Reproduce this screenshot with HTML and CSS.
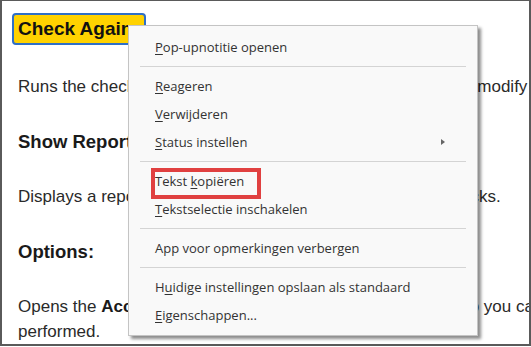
FILE: index.html
```html
<!DOCTYPE html>
<html>
<head>
<meta charset="utf-8">
<link rel="stylesheet" href="styles.css">
</head>
<body>
<div class="frame">
  <div class="content">
    <div class="btn">Check Again</div>
    <p class="para">Runs the checks again to see if the changes you have made modify the results of the report.</p>
    <p class="head">Show Report:</p>
    <p class="para">Displays a report showing the results of the accessibility checks.</p>
    <p class="head">Options:</p>
    <p class="para">Opens the <b>Accessibility Checker Options</b> dialog screen, so you can choose which checks are<br>performed.</p>
  </div>
  <div class="menu">
    <div class="item"><span><u>P</u>op-upnotitie openen</span></div>
    <div class="sep"></div>
    <div class="item"><span><u>R</u>eageren</span></div>
    <div class="item"><span><u>V</u>erwijderen</span></div>
    <div class="item"><span><u>S</u>tatus instellen</span><span class="arrow"></span></div>
    <div class="sep"></div>
    <div class="item"><span>Tekst <u>k</u>opiëren</span></div>
    <div class="item"><span><u>T</u>ekstselectie inschakelen</span></div>
    <div class="sep"></div>
    <div class="item"><span>App voor opmerkingen verbergen</span></div>
    <div class="sep"></div>
    <div class="item"><span>H<u>u</u>idige instellingen opslaan als standaard</span></div>
    <div class="item"><span><u>E</u>igenschappen...</span></div>
  </div>
  <div class="highlight"></div>
</div>
</body>
</html>
```
FILE: styles.css
```css
html, body {
  margin: 0;
  padding: 0;
  background: #ffffff;
}
.frame {
  position: relative;
  width: 531px;
  height: 346px;
  box-sizing: border-box;
  border: 2px solid #5a5a5a;
  border-top-width: 1px;
  overflow: hidden;
  background: #ffffff;
}
.content {
  padding: 12px 0 0 10px;
  width: 900px;
  font-family: "Liberation Sans", Arial, sans-serif;
  color: #2a2a2a;
}
.btn {
  display: inline-block;
  box-sizing: border-box;
  width: 134px;
  height: 32px;
  border: 2px solid #2f6fc6;
  border-radius: 4px;
  background: #ffd200;
  padding: 0 0 0 4px;
  font-size: 19px;
  font-weight: 700;
  line-height: 28px;
  color: #111111;
  white-space: nowrap;
  overflow: hidden;
  margin-bottom: 29px;
  vertical-align: top;
}
.para, .head {
  margin: 0 0 30px 6px;
  line-height: 25px;
  white-space: nowrap;
}
.para {
  font-size: 17px;
}
.para b {
  font-weight: 700;
  color: #1a1a1a;
}
.head {
  font-size: 18.5px;
  font-weight: 700;
  color: #1a1a1a;
}
.menu {
  position: absolute;
  left: 126px;
  top: 24px;
  width: 350px;
  box-sizing: border-box;
  background: #f9f9f9;
  border: 1px solid #c4c4c4;
  box-shadow: 3px 3px 3px rgba(0, 0, 0, 0.45);
  padding: 7px 0 6px 0;
  font-family: "Open Sans", "Noto Sans", sans-serif;
  font-size: 13px;
  color: #333333;
}
.item {
  height: 28px;
  display: flex;
  align-items: center;
  justify-content: space-between;
  padding: 0 32px 0 26px;
  white-space: nowrap;
}
.item u {
  text-decoration: underline;
  text-decoration-thickness: 1px;
  text-underline-offset: 2px;
}
.arrow {
  width: 0;
  height: 0;
  border-left: 4px solid #666666;
  border-top: 3.5px solid transparent;
  border-bottom: 3.5px solid transparent;
}
.sep {
  height: 1px;
  margin: 5px 11px 5px 11px;
  background: #d4d4d4;
}
.highlight {
  position: absolute;
  left: 149px;
  top: 167px;
  width: 110px;
  height: 31px;
  box-sizing: border-box;
  border: 4px solid #e04040;
}
```
